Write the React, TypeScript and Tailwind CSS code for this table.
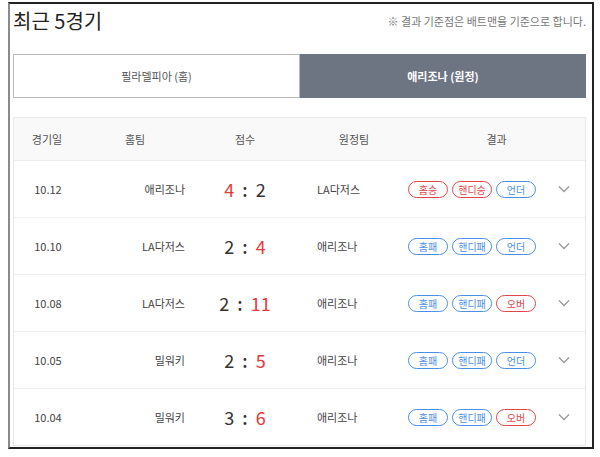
import { Fragment } from "react"

type Badge = { label: string; win: boolean }

const games: {
  date: string
  home: string
  away: string
  homeScore: number
  awayScore: number
  badges: Badge[]
}[] = [
  {
    date: "10.12",
    home: "애리조나",
    away: "LA다저스",
    homeScore: 4,
    awayScore: 2,
    badges: [
      { label: "홈승", win: true },
      { label: "핸디승", win: true },
      { label: "언더", win: false },
    ],
  },
  {
    date: "10.10",
    home: "LA다저스",
    away: "애리조나",
    homeScore: 2,
    awayScore: 4,
    badges: [
      { label: "홈패", win: false },
      { label: "핸디패", win: false },
      { label: "언더", win: false },
    ],
  },
  {
    date: "10.08",
    home: "LA다저스",
    away: "애리조나",
    homeScore: 2,
    awayScore: 11,
    badges: [
      { label: "홈패", win: false },
      { label: "핸디패", win: false },
      { label: "오버", win: true },
    ],
  },
  {
    date: "10.05",
    home: "밀워키",
    away: "애리조나",
    homeScore: 2,
    awayScore: 5,
    badges: [
      { label: "홈패", win: false },
      { label: "핸디패", win: false },
      { label: "언더", win: false },
    ],
  },
  {
    date: "10.04",
    home: "밀워키",
    away: "애리조나",
    homeScore: 3,
    awayScore: 6,
    badges: [
      { label: "홈패", win: false },
      { label: "핸디패", win: false },
      { label: "오버", win: true },
    ],
  },
]

const cols = "grid grid-cols-[66px_110px_110px_108px_1fr]"

function ResultBadge({ badge }: { badge: Badge }) {
  return (
    <span
      className={`flex h-[17px] w-[40px] items-center justify-center rounded-full border-[1.5px] text-[10px] ${
        badge.win ? "border-[#e0454a] text-[#e0454a]" : "border-[#4b8fe6] text-[#4b8fe6]"
      }`}
    >
      {badge.label}
    </span>
  )
}

export default function App() {
  return (
    <div
      className="h-[457px] w-[600px] bg-white pl-[8px] pt-[2px]"
      style={{ fontFamily: '"Noto Sans CJK KR", "Noto Sans", sans-serif' }}
    >
      <div className="h-[447px] w-[586px] border-2 border-[#222] border-l-[#8a8a8a] pl-[3px] pr-[6px]">
        {/* Title */}
        <div className="flex h-[34px] items-center justify-between">
          <h2 className="text-[20px] font-normal text-[#222]">최근 5경기</h2>
          <p className="text-[11px] text-[#777]">※ 결과 기준점은 배트맨을 기준으로 합니다.</p>
        </div>

        {/* Tabs */}
        <div className="mt-[16px] flex h-[44px]">
          <button className="w-[287px] border border-[#b8b8b8] text-[11px] text-[#555]">필라델피아 (홈)</button>
          <button className="flex-1 bg-[#6d7583] text-[11px] font-bold text-white">애리조나 (원정)</button>
        </div>

        {/* Table */}
        <div className="mt-[19px] border border-[#e9e9e9]">
          <div className={`${cols} h-[43px] items-center border-b border-[#ededed] bg-[#f9f9f9] text-[11px] text-[#555]`}>
            <div className="text-center">경기일</div>
            <div className="text-center">홈팀</div>
            <div className="text-center">점수</div>
            <div className="text-center">원정팀</div>
            <div className="text-center">결과</div>
          </div>
          {games.map((g, i) => (
            <Fragment key={g.date}>
              <div
                className={`${cols} h-[56px] items-center text-[11px] text-[#444] ${
                  i < games.length - 1 ? "box-content border-b border-[#f0f0f0]" : ""
                }`}
              >
                <div className="pl-[2px] text-center">{g.date}</div>
                <div className="pr-[5px] text-right">{g.home}</div>
                <div className="flex items-center justify-center gap-[8px] text-[18px] font-normal">
                  <span className={g.homeScore > g.awayScore ? "text-[#e5393b]" : "text-[#333]"}>{g.homeScore}</span>
                  <span className="font-medium text-[#333]">:</span>
                  <span className={g.awayScore > g.homeScore ? "text-[#e5393b]" : "text-[#333]"}>{g.awayScore}</span>
                </div>
                <div className="pl-[17px]">{g.away}</div>
                <div className="flex items-center">
                  <div className="flex gap-[4px]">
                    {g.badges.map((b) => (
                      <ResultBadge key={b.label} badge={b} />
                    ))}
                  </div>
                  <svg className="ml-[22px]" width="12" height="8" viewBox="0 0 12 8" fill="none">
                    <polyline points="1,1.5 6,6.5 11,1.5" stroke="#9a9a9a" strokeWidth="1.4" />
                  </svg>
                </div>
              </div>
            </Fragment>
          ))}
        </div>
      </div>
    </div>
  )
}
